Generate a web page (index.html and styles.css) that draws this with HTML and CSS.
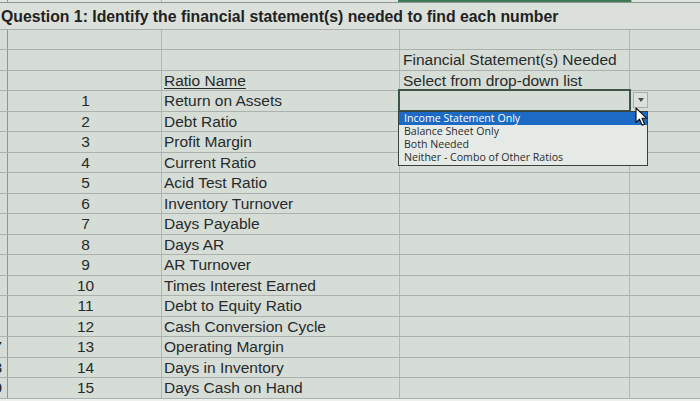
FILE: index.html
```html
<!DOCTYPE html>
<html>
<head>
<meta charset="utf-8">
<link rel="stylesheet" href="styles.css">
</head>
<body>
<div class="sheet">
  <div class="strip">
    <div class="c c0"></div><div class="c c1"></div><div class="c c2"></div><div class="c c3 green"></div><div class="c c4"></div>
  </div>
  <div class="title-row">Question 1: Identify the financial statement(s) needed to find each number</div>
  <div class="row"><div class="c c0"></div><div class="c c1"></div><div class="c c2"></div><div class="c c3"></div><div class="c c4"></div></div>
  <div class="row"><div class="c c0"></div><div class="c c1"></div><div class="c c2"></div><div class="c c3 txt">Financial Statement(s) Needed</div><div class="c c4"></div></div>
  <div class="row"><div class="c c0"></div><div class="c c1"></div><div class="c c2 name"><span class="ul">Ratio Name</span></div><div class="c c3 txt">Select from drop-down list</div><div class="c c4"></div></div>
  <div class="row"><div class="c c0"></div><div class="c c1 num">1</div><div class="c c2 name">Return on Assets</div>
    <div class="c c3 active">
      <div class="sel"></div>
      <div class="btn"><span class="tri"></span></div>
      <div class="list">
        <div class="item hi">Income Statement Only</div>
        <div class="item">Balance Sheet Only</div>
        <div class="item">Both Needed</div>
        <div class="item">Neither - Combo of Other Ratios</div>
      </div>
      <svg class="cursor" width="14" height="20" viewBox="0 0 14 20"><path d="M1 1 L1 15.5 L4.5 12.2 L7.2 18.3 L9.6 17.3 L7 11.3 L11.8 11.3 Z" fill="#ffffff" stroke="#111" stroke-width="1.1" stroke-linejoin="round"/></svg>
    </div>
    <div class="c c4"></div></div>
  <div class="row"><div class="c c0"></div><div class="c c1 num">2</div><div class="c c2 name">Debt Ratio</div><div class="c c3"></div><div class="c c4"></div></div>
  <div class="row"><div class="c c0"></div><div class="c c1 num">3</div><div class="c c2 name">Profit Margin</div><div class="c c3"></div><div class="c c4"></div></div>
  <div class="row"><div class="c c0"></div><div class="c c1 num">4</div><div class="c c2 name">Current Ratio</div><div class="c c3"></div><div class="c c4"></div></div>
  <div class="row"><div class="c c0"></div><div class="c c1 num">5</div><div class="c c2 name">Acid Test Ratio</div><div class="c c3"></div><div class="c c4"></div></div>
  <div class="row"><div class="c c0"></div><div class="c c1 num">6</div><div class="c c2 name">Inventory Turnover</div><div class="c c3"></div><div class="c c4"></div></div>
  <div class="row"><div class="c c0"></div><div class="c c1 num">7</div><div class="c c2 name">Days Payable</div><div class="c c3"></div><div class="c c4"></div></div>
  <div class="row"><div class="c c0"></div><div class="c c1 num">8</div><div class="c c2 name">Days AR</div><div class="c c3"></div><div class="c c4"></div></div>
  <div class="row"><div class="c c0"></div><div class="c c1 num">9</div><div class="c c2 name">AR Turnover</div><div class="c c3"></div><div class="c c4"></div></div>
  <div class="row"><div class="c c0"></div><div class="c c1 num">10</div><div class="c c2 name">Times Interest Earned</div><div class="c c3"></div><div class="c c4"></div></div>
  <div class="row"><div class="c c0"></div><div class="c c1 num">11</div><div class="c c2 name">Debt to Equity Ratio</div><div class="c c3"></div><div class="c c4"></div></div>
  <div class="row"><div class="c c0"></div><div class="c c1 num">12</div><div class="c c2 name">Cash Conversion Cycle</div><div class="c c3"></div><div class="c c4"></div></div>
  <div class="row"><div class="c c0 hdr"><span>7</span></div><div class="c c1 num">13</div><div class="c c2 name">Operating Margin</div><div class="c c3"></div><div class="c c4"></div></div>
  <div class="row"><div class="c c0 hdr"><span>8</span></div><div class="c c1 num">14</div><div class="c c2 name">Days in Inventory</div><div class="c c3"></div><div class="c c4"></div></div>
  <div class="row"><div class="c c0 hdr"><span>9</span></div><div class="c c1 num">15</div><div class="c c2 name">Days Cash on Hand</div><div class="c c3"></div><div class="c c4"></div></div>
  <div class="bottom"></div>
</div>
</body>
</html>
```
FILE: styles.css
```css
html, body {
  margin: 0;
  padding: 0;
  background: #d7ddd7;
}
.sheet {
  width: 700px;
  height: 401px;
  overflow: hidden;
  background: #d6dcd6;
  font-family: "Liberation Sans", Arial, sans-serif;
  color: #272b2b;
}
.strip {
  display: grid;
  grid-template-columns: 8px 154px 238px 230px 70px;
  height: 2px;
  border-bottom: 1px solid #8f9791;
  background: #dfe4df;
}
.strip .green {
  background: #3f7a57;
  margin: 0 -2px;
}
.title-row {
  height: 26.5px;
  box-sizing: border-box;
  border-bottom: 1px solid #a9b0ab;
  background: #dbe0db;
  font-weight: bold;
  font-size: 15.8px;
  line-height: 27px;
  padding-left: 1px;
  white-space: nowrap;
  color: #1f2222;
}
.row {
  display: grid;
  grid-template-columns: 8px 154px 238px 230px 70px;
  height: 20.5px;
  box-sizing: border-box;
  border-bottom: 1px solid #abb2ad;
  font-size: 15.5px;
  line-height: 19px;
  white-space: nowrap;
}
.c {
  box-sizing: border-box;
  border-right: 1px solid #b1b8b3;
  position: relative;
}
.c4 { border-right: none; }
.c0 { border-right-color: #8e9690; }
.num { text-align: center; padding-left: 2px; }
.name { padding-left: 2px; }
.txt { padding-left: 3px; }
.ul { text-decoration: underline; text-underline-offset: 2px; }
.hdr {
  overflow: hidden;
  display: flex;
  justify-content: flex-end;
  padding-right: 5px;
  color: #222;
}
.bottom {
  height: 4px;
  background: #eef0ee;
}
.active { z-index: 2; }
.sel {
  position: absolute;
  left: -2px;
  top: -2px;
  right: -2px;
  bottom: -1px;
  border: 2px solid #3e5546;
}
.btn {
  position: absolute;
  left: 233px;
  top: 1px;
  width: 15px;
  height: 16px;
  box-sizing: border-box;
  background: #dde1de;
  border: 1px solid #a7aea9;
  display: flex;
  align-items: center;
  justify-content: center;
}
.tri {
  width: 0;
  height: 0;
  border-left: 3px solid transparent;
  border-right: 3px solid transparent;
  border-top: 4px solid #4a4f4d;
}
.list {
  position: absolute;
  left: -2px;
  top: 20px;
  width: 250px;
  box-sizing: border-box;
  border: 1px solid #3c403e;
  background: #e6eae7;
  padding: 0 0 1px 0;
  font-family: "Open Sans", "Noto Sans", sans-serif;
  font-size: 10.6px;
  line-height: 13px;
  color: #2a2d2c;
}
.item {
  height: 13px;
  padding-left: 5px;
}
.item.hi {
  background: #1c6ac4;
  color: #ffffff;
}
.cursor {
  position: absolute;
  left: 235px;
  top: 16px;
}
```
